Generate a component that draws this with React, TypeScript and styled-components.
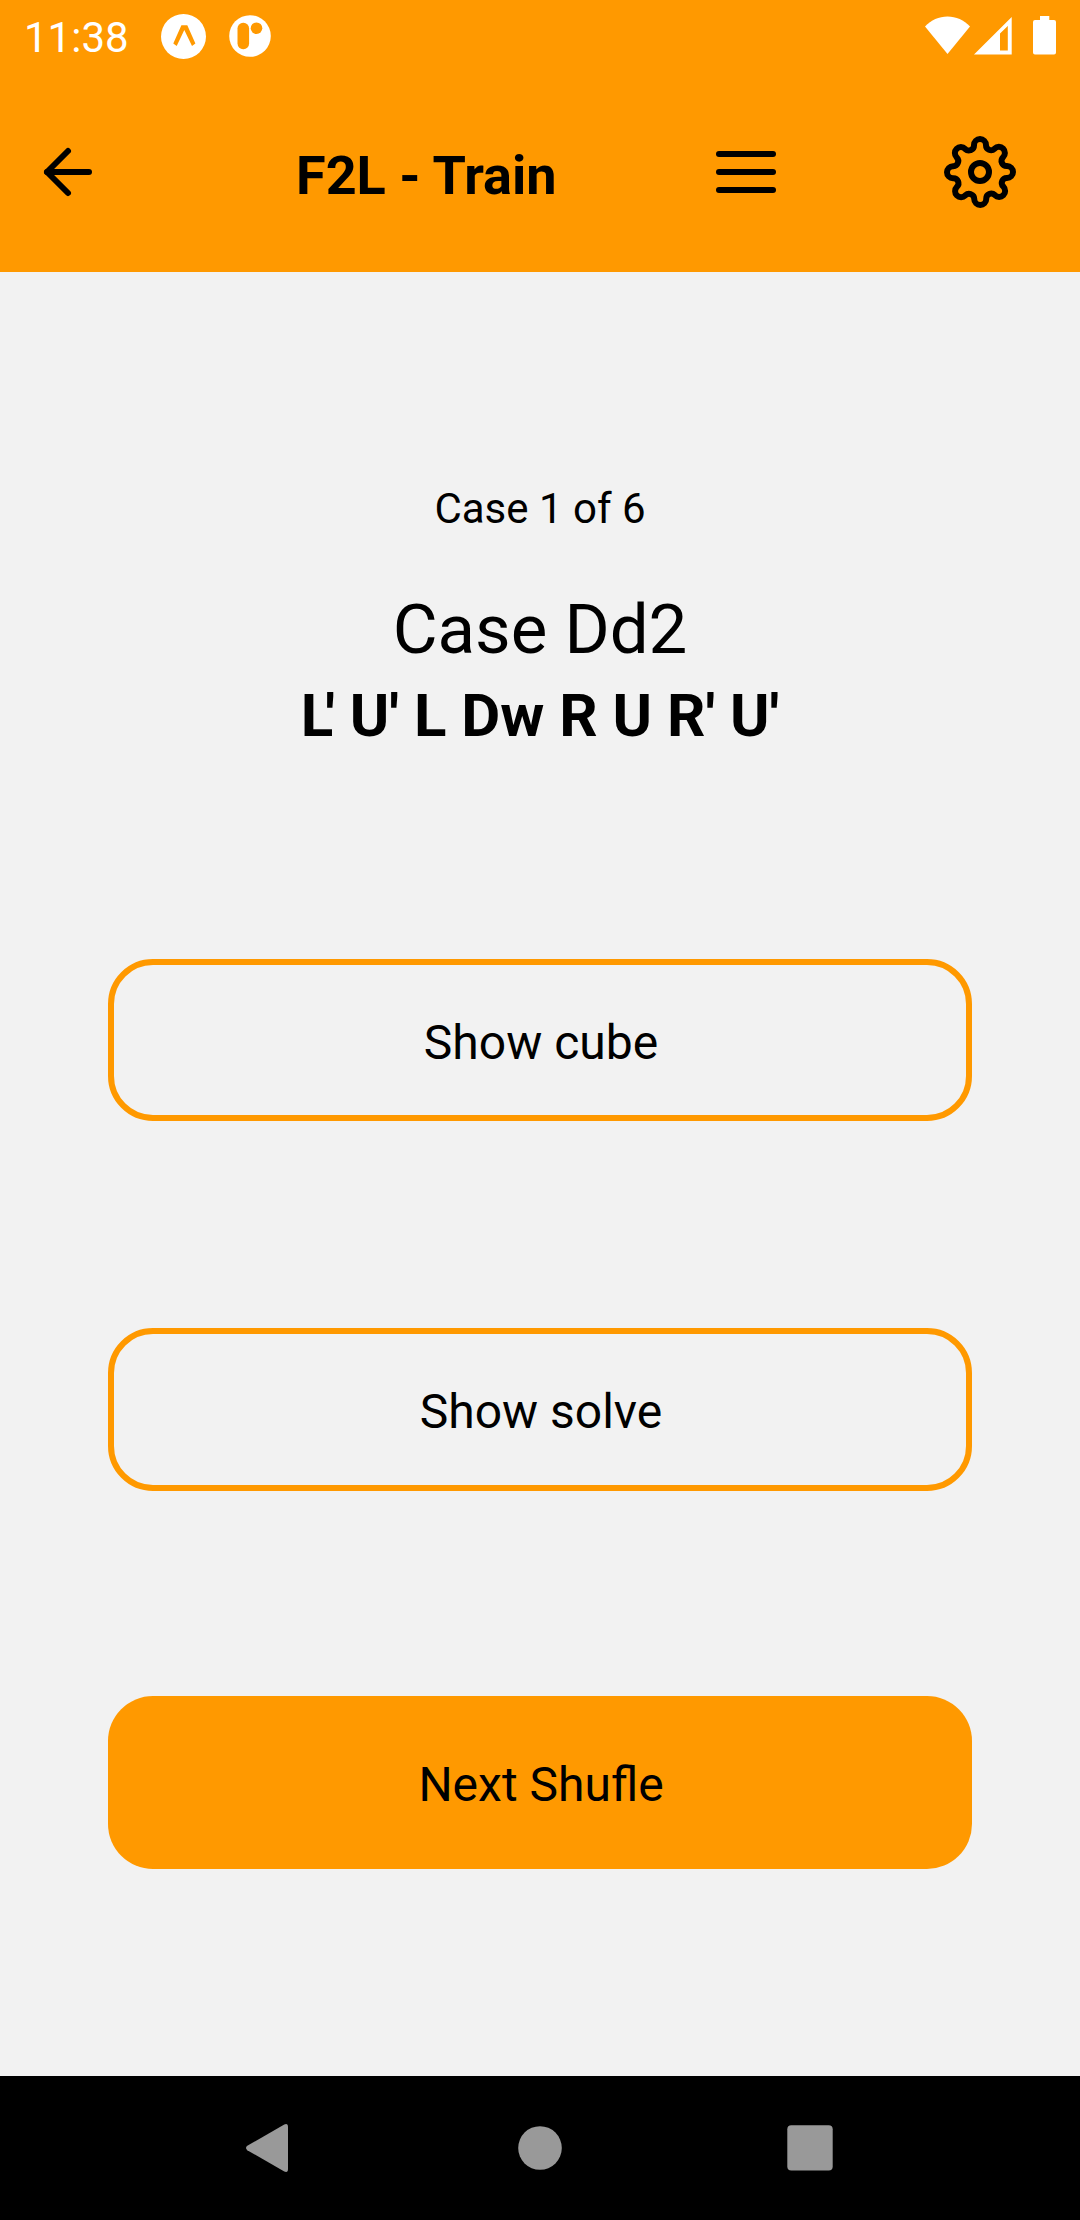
import React from "react";
import styled, { createGlobalStyle } from "styled-components";
import { FiArrowLeft, FiMenu, FiSettings } from "react-icons/fi";

const ORANGE = "#ff9900";

const GlobalStyle = createGlobalStyle`
  body {
    margin: 0;
    background: #f2f2f2;
  }
  * {
    box-sizing: border-box;
  }
`;

const Screen = styled.div`
  display: flex;
  flex-direction: column;
  width: 1080px;
  height: 2220px;
  background: #f2f2f2;
  color: #000;
  font-family: Roboto, "Noto Sans", sans-serif;
`;

const StatusBar = styled.div`
  display: flex;
  align-items: center;
  height: 72px;
  padding: 0 24px 0 24px;
  background: ${ORANGE};
  color: #fff;
`;

const Clock = styled.span`
  width: 137px;
  font-size: 42px;
  line-height: 50px;
  padding-top: 3px;
  white-space: nowrap;
`;

const Notifications = styled.svg`
  width: 110px;
  height: 72px;
`;

const SystemIcons = styled.svg`
  width: 136px;
  height: 72px;
  margin-left: auto;
`;

const Header = styled.header`
  display: flex;
  align-items: center;
  height: 200px;
  padding: 0 64px 0 32px;
  background: ${ORANGE};
`;

const IconButton = styled.button`
  display: flex;
  width: 72px;
  height: 72px;
  padding: 0;
  border: 0;
  background: none;
  color: #000;
  font-size: 72px;
`;

const Title = styled.h1`
  width: 414px;
  margin: 0 0 0 192px;
  padding-top: 8px;
  font-size: 54px;
  font-weight: 700;
  line-height: 64px;
  white-space: nowrap;
`;

const Spacer = styled.div`
  width: 162px;
`;

const Main = styled.main`
  display: flex;
  flex-direction: column;
  align-items: center;
  flex: 1;
  padding-top: 212px;
`;

const Progress = styled.p`
  margin: 0;
  font-size: 42px;
  line-height: 50px;
`;

const CaseName = styled.h2`
  margin: 56px 0 0;
  font-size: 69px;
  font-weight: 400;
  line-height: 80px;
`;

const Algorithm = styled.p`
  margin: 10px 0 0;
  font-size: 60px;
  font-weight: 700;
  line-height: 72px;
`;

const KernedMove = styled.span`
  letter-spacing: -8px;
`;

const Actions = styled.div`
  display: flex;
  flex-direction: column;
  width: 864px;
  margin-top: 207px;
`;

const ActionButton = styled.button<{ $filled?: boolean; $height: number; $gap?: number }>`
  display: flex;
  align-items: center;
  justify-content: center;
  height: ${(p) => p.$height}px;
  margin: ${(p) => p.$gap ?? 0}px 0 0;
  padding: 5px 0 0 2px;
  border: ${(p) => (p.$filled ? "0" : `6px solid ${ORANGE}`)};
  border-radius: 45px;
  background: ${(p) => (p.$filled ? ORANGE : "transparent")};
  color: #000;
  font-family: inherit;
  font-size: 48px;
  line-height: 56px;
`;

const NavBar = styled.nav`
  display: flex;
  align-items: center;
  justify-content: space-between;
  height: 144px;
  padding: 0 234px;
  background: #000;
`;

const NavIcon = styled.svg`
  width: 72px;
  height: 72px;
  fill: #999;
`;

export default function App() {
  return (
    <>
      <GlobalStyle />
      <Screen>
        <StatusBar>
          <Clock>11:38</Clock>
          <Notifications viewBox="161 0 110 72">
            <circle cx="183.5" cy="36.5" r="22.5" fill="#fff" />
            <path
              d="M181.4 25.2H187.3L195.4 43.4L192 46L184.3 30L176.7 46L173.3 43.6Z"
              fill={ORANGE}
            />
            <circle cx="250" cy="36" r="20.8" fill="#fff" />
            <rect x="237.5" y="22.8" width="11.6" height="26.4" rx="5.6" fill={ORANGE} />
            <circle cx="256.5" cy="28.2" r="5.8" fill={ORANGE} />
          </Notifications>
          <SystemIcons viewBox="920 0 136 72" fill="#fff">
            <path d="M947.5 54L925 26.4C931 20 939 16.4 947.5 16.4S964 20 970 26.4Z" />
            <path
              fillRule="evenodd"
              d="M974 54.6L1011.7 17V54.6ZM1000 33.4V50.6H1007.8V26Z"
            />
            <path d="M1040 16H1049.3V20H1054Q1056 20 1056 22V52.5Q1056 54.6 1054 54.6H1035Q1033 54.6 1033 52.5V22Q1033 20 1035 20H1040Z" />
          </SystemIcons>
        </StatusBar>
        <Header>
          <IconButton aria-label="Back">
            <FiArrowLeft />
          </IconButton>
          <Title>F2L - Train</Title>
          <IconButton aria-label="Menu">
            <FiMenu />
          </IconButton>
          <Spacer />
          <IconButton aria-label="Settings">
            <FiSettings />
          </IconButton>
        </Header>
        <Main>
          <Progress>Case 1 of 6</Progress>
          <CaseName>Case Dd2</CaseName>
          <Algorithm>
            <KernedMove>L</KernedMove>' U' L Dw R U R' U'
          </Algorithm>
          <Actions>
            <ActionButton $height={162}>Show cube</ActionButton>
            <ActionButton $height={163} $gap={207}>
              Show solve
            </ActionButton>
            <ActionButton $filled $height={173} $gap={205}>
              Next Shufle
            </ActionButton>
          </Actions>
        </Main>
        <NavBar>
          <NavIcon viewBox="0 0 72 72">
            <path d="M13.3 33.8L50.3 12.5Q54 11 54 15V57Q54 61 50.3 59.5L13.3 38.2Q10.7 36 13.3 33.8Z" />
          </NavIcon>
          <NavIcon viewBox="0 0 72 72">
            <circle cx="36" cy="36" r="21.8" />
          </NavIcon>
          <NavIcon viewBox="0 0 72 72">
            <rect x="13.3" y="13.2" width="45.4" height="45.4" rx="4" />
          </NavIcon>
        </NavBar>
      </Screen>
    </>
  );
}
